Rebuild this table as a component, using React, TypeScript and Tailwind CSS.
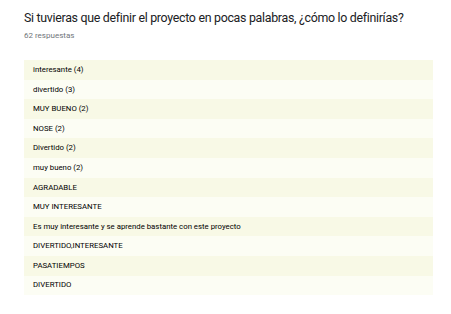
const answers = [
  'interesante (4)',
  'divertido (3)',
  'MUY BUENO (2)',
  'NOSE (2)',
  'Divertido (2)',
  'muy bueno (2)',
  'AGRADABLE',
  'MUY INTERESANTE',
  'Es muy interesante y se aprende bastante con este proyecto',
  'DIVERTIDO,INTERESANTE',
  'PASATIEMPOS',
  'DIVERTIDO',
]

export default function App() {
  return (
    <div className="w-[451px] h-[314px] bg-white font-['Roboto',sans-serif] pl-[24px] pr-[18px] pt-[9px]">
      <h1 className="text-[12.4px] tracking-[-0.3px] leading-[18px] text-[#202124] whitespace-nowrap">
        Si tuvieras que definir el proyecto en pocas palabras, ¿cómo lo definirías?
      </h1>
      <div className="text-[8px] leading-[12px] mt-[3px] text-[#70757a]">62 respuestas</div>
      <div className="mt-[18px] flex flex-col">
        {answers.map((a, i) => (
          <div
            key={i}
            className={`h-[19.6px] flex items-center pl-[9px] text-[7.8px] text-black ${
              i % 2 === 0 ? 'bg-[#f8f9e6]' : 'bg-[#fcfdf4]'
            }`}>
            {a}
          </div>
        ))}
      </div>
    </div>
  )
}
